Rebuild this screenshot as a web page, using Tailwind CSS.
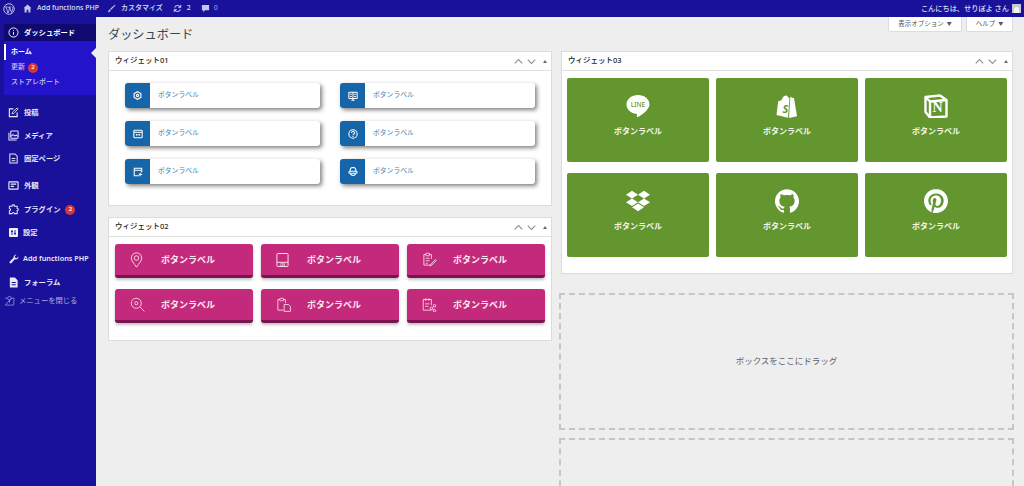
<!DOCTYPE html>
<html lang="ja">
<head>
  <meta charset="UTF-8" />
  <meta name="viewport" content="width=device-width, initial-scale=1.0"/>
  <title>ダッシュボード</title>
  <script src="https://cdn.jsdelivr.net/npm/@tailwindcss/browser@4"></script>
</head>
<body class="h-[486px] overflow-hidden bg-[#eeeeee] font-['Noto_Sans','Noto_Sans_CJK_JP',sans-serif] text-[#1d2327]">

  <!-- admin bar -->
  <header class="h-[17px] bg-[#1a119a] flex items-center justify-between pl-[3px] pr-[3px] text-[7px] font-medium text-[#dfe0f5]">
    <div class="flex items-center">
      <svg class="w-[12px] h-[12px] text-[#b9bbe6]" viewBox="0 0 24 24" fill="none" stroke="currentColor"><circle cx="12" cy="12" r="10.500" stroke-width="2"/><path d="M4.500 8h5M6 8l4 12 3-8-1.500-4M11 8h5M13 8l4 11 2.500-7c.7-2-.500-4-2-5" stroke-width="1.800"/></svg>
      <svg class="w-[9px] h-[9px] ml-[8px] text-[#c3c5ea]" viewBox="0 0 20 20" fill="currentColor"><path d="M10 1 1 9.500h2.500V19h4.500v-6h4v6h4.500V9.500H19z"/></svg>
      <span class="ml-[5px]">Add functions PHP</span>
      <svg class="w-[9px] h-[9px] ml-[8px] text-[#c3c5ea]" viewBox="0 0 20 20" fill="currentColor"><path d="M17.500 1.500 19 3 9.500 13 7 10.500zM6 11.500 8.500 14c-1 3-4 4.500-7.500 4 2-1 2.500-2 3-4 .3-1.300 1-2.200 2-2.500z"/></svg>
      <span class="ml-[5px]">カスタマイズ</span>
      <svg class="w-[9px] h-[9px] ml-[10px] text-[#c3c5ea]" viewBox="0 0 20 20" fill="none" stroke="currentColor" stroke-width="2.400"><path d="M3.500 8A7 7 0 0 1 16 6.500M16.500 12A7 7 0 0 1 4 13.500"/><path d="M17.500 2v6h-6M2.500 18v-6h6" stroke-width="1.500" fill="currentColor"/></svg>
      <span class="ml-[5px]">2</span>
      <svg class="w-[9px] h-[9px] ml-[10px] text-[#c3c5ea]" viewBox="0 0 20 20" fill="currentColor"><path d="M2 2h16v12H9l-4 4.500V14H2z"/></svg>
      <span class="ml-[4px] text-[#8f8fd8]">0</span>
    </div>
    <div class="flex items-center gap-[3px] text-[7.200px]">
      <span>こんにちは、せりぽよ さん</span>
      <span class="w-[9px] h-[9px] bg-[#c9c9d6] flex items-end justify-center"><span class="w-[5px] h-[6px] rounded-t-full bg-[#f2f2f2]"></span></span>
    </div>
  </header>

  <div class="flex h-[469px] overflow-hidden">
    <!-- sidebar -->
    <nav class="w-[96px] shrink-0 bg-[#1a119a] pt-[7px] text-[7.300px] font-semibold text-[#e8e8f6]">
      <div class="relative ml-[4px]">
        <div class="h-[17px] bg-[#100a70] flex items-center pl-[4px] gap-[5px] text-white">
          <svg class="w-[11px] h-[11px]" viewBox="0 0 24 24" fill="none" stroke="currentColor" stroke-width="2"><circle cx="12" cy="12" r="10"/><path d="M12 11v6M12 7v2"/></svg>
          <span>ダッシュボード</span>
        </div>
        <div class="relative h-[54px] bg-[#2313c9] pt-[3px] text-[7px] font-medium">
          <div class="h-[16px] border-l-2 border-white pl-[5px] flex items-center font-bold text-white">ホーム</div>
          <div class="h-[15px] pl-[7px] flex items-center gap-[3px] text-[#c8c8f2]">更新 <span class="w-[10px] h-[10px] rounded-full bg-[#d63638] text-white text-[6px] flex items-center justify-center">2</span></div>
          <div class="h-[15px] pl-[7px] flex items-center text-[#c8c8f2]">ストアレポート</div>
          <span class="absolute right-0 top-[7px] border-y-[5px] border-r-[5px] border-y-transparent border-r-[#eeeeee]"></span>
        </div>
      </div>

      <div class="mt-[8px] h-[19px] flex items-center pl-[8px] gap-[5px]">
        <svg class="w-[11px] h-[11px]" viewBox="0 0 24 24" fill="none" stroke="currentColor" stroke-width="2.500"><path d="M12 4H3v17h17v-9"/><path d="M9 15l1-4L20 2l2 2-9 10z" stroke-width="1.800"/></svg>
        <span>投稿</span>
      </div>
      <div class="mt-[4px] h-[19px] flex items-center pl-[8px] gap-[5px]">
        <svg class="w-[11px] h-[11px]" viewBox="0 0 24 24" fill="none" stroke="currentColor" stroke-width="2.200"><path d="M2 6v16h17"/><rect x="6" y="2" width="16" height="16" rx="1.500"/><path d="M6 14l5-4 4 3 3-2 4 3" /></svg>
        <span>メディア</span>
      </div>
      <div class="mt-[4px] h-[19px] flex items-center pl-[8px] gap-[5px]">
        <svg class="w-[11px] h-[11px]" viewBox="0 0 24 24" fill="none" stroke="currentColor" stroke-width="2.200"><path d="M4 2h11l5 5v15H4z"/><path d="M8 12h8M8 17h8"/></svg>
        <span>固定ページ</span>
      </div>
      <div class="mt-[8px] h-[19px] flex items-center pl-[8px] gap-[5px]">
        <svg class="w-[11px] h-[11px]" viewBox="0 0 24 24" fill="none" stroke="currentColor" stroke-width="2.500"><rect x="2" y="4" width="20" height="16" rx="1"/><path d="M6 9h12M6 14h7"/></svg>
        <span>外観</span>
      </div>
      <div class="mt-[5px] h-[19px] flex items-center pl-[8px] gap-[5px]">
        <svg class="w-[11px] h-[11px]" viewBox="0 0 24 24" fill="none" stroke="currentColor" stroke-width="2.200"><path d="M9 3c0-2 5-2 5 0 0 1-1 1.500 0 2h6v5c1 .8 2.500-.5 2.500 2s-1.500 2-2.500 2v7h-6c0-3-5-3-5 0H3v-6c2 0 2.500-1 2.500-2.500S4 10 3 10V5h6c.5-.5 0-1 0-2z"/></svg>
        <span>プラグイン</span>
        <span class="w-[10px] h-[10px] rounded-full bg-[#d63638] text-white text-[6px] flex items-center justify-center">2</span>
      </div>
      <div class="mt-[4px] h-[19px] flex items-center pl-[9px] gap-[5px]">
        <span class="w-[9px] h-[9px] bg-[#f0f0fa] rounded-[1px] flex items-center justify-center text-[#1a119a] text-[6px] leading-none">
          <svg class="w-[7px] h-[7px]" viewBox="0 0 14 14" fill="none" stroke="currentColor" stroke-width="1.800"><path d="M4 2v10M2 5h4M10 2v10M8 9h4"/></svg>
        </span>
        <span>設定</span>
      </div>
      <div class="mt-[7px] h-[19px] flex items-center pl-[9px] gap-[4px]">
        <svg class="w-[10px] h-[10px]" viewBox="0 0 20 20" fill="currentColor"><path d="M19 5.500c0 3-2.500 5.500-5.500 5.500-.7 0-1.300-.1-1.900-.3L5 18c-1 1-2.500 1-3.300 0s-1-2.300 0-3.200l7.400-7.300A5.500 5.500 0 0 1 15 1l-3.500 3.500 1 3 3 1L19 5z"/></svg>
        <span>Add functions PHP</span>
      </div>
      <div class="mt-[5px] h-[19px] flex items-center pl-[8px] gap-[5px]">
        <svg class="w-[11px] h-[11px]" viewBox="0 0 24 24" fill="currentColor"><path d="M4 1h11l6 6v16H4zM8 11v2h9v-2zm0 5v2h9v-2z" fill-rule="evenodd"/></svg>
        <span>フォーラム</span>
      </div>
      <div class="h-[17px] flex items-center pl-[4px] gap-[4px] font-normal text-[#a8a8e0]">
        <svg class="w-[11px] h-[11px]" viewBox="0 0 24 24" fill="none" stroke="currentColor" stroke-width="1.500"><path d="M2 7h6M16 7h6l-1 15H3z"/><circle cx="12" cy="7" r="4"/><path d="M12 11v6"/></svg>
        <span>メニューを閉じる</span>
      </div>
    </nav>

    <!-- main -->
    <main class="flex-1 min-w-0 pl-[12px] pr-[11px] overflow-hidden">
      <div class="flex justify-between items-start h-[34px]">
        <h1 class="pt-[9px] text-[12.200px] leading-[18px] text-[#3c434a]">ダッシュボード</h1>
        <div class="flex gap-[4px] text-[6.500px] text-[#50575e]">
          <div class="w-[74px] h-[15px] bg-white border-x border-b border-[#dcdcde] flex items-center justify-center gap-[3px] rounded-b-[2px]">表示オプション <span class="text-[5px]">▼</span></div>
          <div class="w-[47px] h-[15px] bg-white border-x border-b border-[#dcdcde] flex items-center justify-center gap-[3px] rounded-b-[2px]">ヘルプ <span class="text-[5px]">▼</span></div>
        </div>
      </div>

      <div class="flex gap-[8px]">
        <!-- left column -->
        <div class="w-[444px] shrink-0 flex flex-col gap-[11px]">
          <section class="h-[155px] bg-white border border-[#dcdcde]">
            <div class="h-[19px] border-b border-[#e0e0e0] flex items-center justify-between pl-[6px] pr-[4px]">
              <h2 class="text-[7.500px] font-medium text-[#1d2327]">ウィジェット01</h2>
              <div class="flex items-center gap-[4px] text-[#8c8f94]">
                <svg class="w-[9px] h-[9px]" viewBox="0 0 12 12" fill="none" stroke="currentColor" stroke-width="1.500"><path d="M1 8.500 6 3.500l5 5"/></svg>
                <svg class="w-[9px] h-[9px]" viewBox="0 0 12 12" fill="none" stroke="currentColor" stroke-width="1.500"><path d="M1 3.500 6 8.500l5-5"/></svg>
                <span class="ml-[3px] border-x-[2.500px] border-b-[3px] border-x-transparent border-b-[#646970]"></span>
              </div>
            </div>
            <div class="grid grid-cols-[195px_195px] gap-x-[20px] gap-y-[13px] pl-[16px] pt-[12px]">
              <a class="h-[25px] flex items-stretch bg-white rounded-[3px] shadow-[2px_2px_4px_rgba(0,0,0,0.5)] text-[6.800px] text-[#3f7fb2]">
                <span class="w-[25px] bg-[#1565a8] rounded-l-[3px] flex items-center justify-center text-white"><svg class="w-[9px] h-[9px]" viewBox="0 0 24 24" fill="none" stroke="currentColor" stroke-width="3"><path d="M12 2 21 7v10l-9 5-9-5V7z"/><circle cx="12" cy="12" r="3"/></svg></span>
                <span class="pl-[8px] self-center">ボタンラベル</span>
              </a>
              <a class="h-[25px] flex items-stretch bg-white rounded-[3px] shadow-[2px_2px_4px_rgba(0,0,0,0.5)] text-[6.800px] text-[#3f7fb2]">
                <span class="w-[25px] bg-[#1565a8] rounded-l-[3px] flex items-center justify-center text-white"><svg class="w-[10px] h-[10px]" viewBox="0 0 24 24" fill="none" stroke="currentColor" stroke-width="2.500"><rect x="2" y="3" width="20" height="15" rx="1"/><path d="M8 22h8M12 18v4M12 3v15M5 8h4M15 8h4M5 13h4M15 13h4"/></svg></span>
                <span class="pl-[8px] self-center">ボタンラベル</span>
              </a>
              <a class="h-[25px] flex items-stretch bg-white rounded-[3px] shadow-[2px_2px_4px_rgba(0,0,0,0.5)] text-[6.800px] text-[#3f7fb2]">
                <span class="w-[25px] bg-[#1565a8] rounded-l-[3px] flex items-center justify-center text-white"><svg class="w-[10px] h-[10px]" viewBox="0 0 24 24" fill="none" stroke="currentColor" stroke-width="2.500"><rect x="2" y="3" width="20" height="18" rx="2"/><path d="M2 8h20"/><path d="M7 14h4M13 14h4" stroke-width="3.500"/></svg></span>
                <span class="pl-[8px] self-center">ボタンラベル</span>
              </a>
              <a class="h-[25px] flex items-stretch bg-white rounded-[3px] shadow-[2px_2px_4px_rgba(0,0,0,0.5)] text-[6.800px] text-[#3f7fb2]">
                <span class="w-[25px] bg-[#1565a8] rounded-l-[3px] flex items-center justify-center text-white"><svg class="w-[10px] h-[10px]" viewBox="0 0 24 24" fill="none" stroke="currentColor" stroke-width="2.500"><circle cx="12" cy="12" r="10"/><path d="M8.500 9.500a3.500 3.500 0 1 1 5 3c-1 .6-1.500 1-1.500 2.500M12 17v2"/></svg></span>
                <span class="pl-[8px] self-center">ボタンラベル</span>
              </a>
              <a class="h-[25px] flex items-stretch bg-white rounded-[3px] shadow-[2px_2px_4px_rgba(0,0,0,0.5)] text-[6.800px] text-[#3f7fb2]">
                <span class="w-[25px] bg-[#1565a8] rounded-l-[3px] flex items-center justify-center text-white"><svg class="w-[10px] h-[10px]" viewBox="0 0 24 24" fill="none" stroke="currentColor" stroke-width="2.500"><path d="M21 13V3H3v18h11M3 8h18"/><path d="M17 14v8M14 18h8"/></svg></span>
                <span class="pl-[8px] self-center">ボタンラベル</span>
              </a>
              <a class="h-[25px] flex items-stretch bg-white rounded-[3px] shadow-[2px_2px_4px_rgba(0,0,0,0.5)] text-[6.800px] text-[#3f7fb2]">
                <span class="w-[25px] bg-[#1565a8] rounded-l-[3px] flex items-center justify-center text-white"><svg class="w-[10px] h-[10px]" viewBox="0 0 24 24" fill="none" stroke="currentColor" stroke-width="2.500"><path d="M5 12V8a7 7 0 0 1 14 0v4"/><rect x="2" y="10" width="20" height="5" rx="2.500"/><path d="M6 15c0 7 12 7 12 0"/></svg></span>
                <span class="pl-[8px] self-center">ボタンラベル</span>
              </a>
            </div>
          </section>

          <section class="h-[124px] bg-white border border-[#dcdcde]">
            <div class="h-[19px] border-b border-[#e0e0e0] flex items-center justify-between pl-[6px] pr-[4px]">
              <h2 class="text-[7.500px] font-medium text-[#1d2327]">ウィジェット02</h2>
              <div class="flex items-center gap-[4px] text-[#8c8f94]">
                <svg class="w-[9px] h-[9px]" viewBox="0 0 12 12" fill="none" stroke="currentColor" stroke-width="1.500"><path d="M1 8.500 6 3.500l5 5"/></svg>
                <svg class="w-[9px] h-[9px]" viewBox="0 0 12 12" fill="none" stroke="currentColor" stroke-width="1.500"><path d="M1 3.500 6 8.500l5-5"/></svg>
                <span class="ml-[3px] border-x-[2.500px] border-b-[3px] border-x-transparent border-b-[#646970]"></span>
              </div>
            </div>
            <div class="grid grid-cols-[138px_138px_138px] gap-x-[8px] gap-y-[11px] pl-[6px] pt-[7px]">
              <a class="h-[34px] flex items-center bg-[#c42a7b] border-b-[3px] border-[#7a1450] rounded-[3px] shadow-[0_2px_3px_rgba(0,0,0,0.25)] text-[9px] font-semibold text-[#fbe9f2]">
                <span class="w-[46px] pl-[15px]"><svg class="w-[13px] h-[16px]" viewBox="0 0 20 24" fill="none" stroke="currentColor" stroke-width="1.300"><path d="M10 23C6 17 2 13 2 9a8 8 0 0 1 16 0c0 4-4 8-8 14z"/><circle cx="10" cy="9" r="3.500"/></svg></span>
                <span>ボタンラベル</span>
              </a>
              <a class="h-[34px] flex items-center bg-[#c42a7b] border-b-[3px] border-[#7a1450] rounded-[3px] shadow-[0_2px_3px_rgba(0,0,0,0.25)] text-[9px] font-semibold text-[#fbe9f2]">
                <span class="w-[46px] pl-[15px]"><svg class="w-[13px] h-[16px]" viewBox="0 0 14 16" fill="none" stroke="currentColor" stroke-width="1"><rect x="1" y="1" width="12" height="14" rx="1"/><path d="M1 10.500h12"/><text x="7" y="14" text-anchor="middle" font-size="3.200" fill="currentColor" stroke="none">CSS</text></svg></span>
                <span>ボタンラベル</span>
              </a>
              <a class="h-[34px] flex items-center bg-[#c42a7b] border-b-[3px] border-[#7a1450] rounded-[3px] shadow-[0_2px_3px_rgba(0,0,0,0.25)] text-[9px] font-semibold text-[#fbe9f2]">
                <span class="w-[46px] pl-[15px]"><svg class="w-[15px] h-[15px]" viewBox="0 0 24 24" fill="none" stroke="currentColor" stroke-width="1.300"><path d="M15 21H3V4h3M12 4h3v7"/><rect x="6" y="2" width="6" height="4" rx="1"/><path d="M6 10h6M6 14h6M6 18h3M14 20l-1 2 2-.5 8-8-1.500-1.500z"/></svg></span>
                <span>ボタンラベル</span>
              </a>
              <a class="h-[34px] flex items-center bg-[#c42a7b] border-b-[3px] border-[#7a1450] rounded-[3px] shadow-[0_2px_3px_rgba(0,0,0,0.25)] text-[9px] font-semibold text-[#fbe9f2]">
                <span class="w-[46px] pl-[15px]"><svg class="w-[15px] h-[15px]" viewBox="0 0 24 24" fill="none" stroke="currentColor" stroke-width="1.300"><circle cx="10" cy="10" r="8"/><circle cx="10" cy="10" r="2.500"/><path d="M16 16l7 7"/></svg></span>
                <span>ボタンラベル</span>
              </a>
              <a class="h-[34px] flex items-center bg-[#c42a7b] border-b-[3px] border-[#7a1450] rounded-[3px] shadow-[0_2px_3px_rgba(0,0,0,0.25)] text-[9px] font-semibold text-[#fbe9f2]">
                <span class="w-[46px] pl-[15px]"><svg class="w-[15px] h-[15px]" viewBox="0 0 24 24" fill="none" stroke="currentColor" stroke-width="1.300"><path d="M12 21H3V4h3M12 4h3v6"/><rect x="6" y="2" width="6" height="4" rx="1"/><path d="M13 12h7l3 3v8H13z"/></svg></span>
                <span>ボタンラベル</span>
              </a>
              <a class="h-[34px] flex items-center bg-[#c42a7b] border-b-[3px] border-[#7a1450] rounded-[3px] shadow-[0_2px_3px_rgba(0,0,0,0.25)] text-[9px] font-semibold text-[#fbe9f2]">
                <span class="w-[46px] pl-[15px]"><svg class="w-[15px] h-[15px]" viewBox="0 0 24 24" fill="none" stroke="currentColor" stroke-width="1.300"><path d="M15 21H2V4h13v9M6 2v4M11 2v4M5 11h7M5 15h5"/><circle cx="20" cy="14" r="2"/><circle cx="20" cy="22" r="2"/><circle cx="15" cy="18" r="2"/><path d="M17 17l2-2M17 19l2 2"/></svg></span>
                <span>ボタンラベル</span>
              </a>
            </div>
          </section>
        </div>

        <!-- right column -->
        <div class="w-[453px] shrink-0 flex flex-col">
          <section class="ml-[1px] w-[452px] h-[223px] bg-white border border-[#dcdcde]">
            <div class="h-[19px] border-b border-[#e0e0e0] flex items-center justify-between pl-[6px] pr-[4px]">
              <h2 class="text-[7.500px] font-medium text-[#1d2327]">ウィジェット03</h2>
              <div class="flex items-center gap-[4px] text-[#8c8f94]">
                <svg class="w-[9px] h-[9px]" viewBox="0 0 12 12" fill="none" stroke="currentColor" stroke-width="1.500"><path d="M1 8.500 6 3.500l5 5"/></svg>
                <svg class="w-[9px] h-[9px]" viewBox="0 0 12 12" fill="none" stroke="currentColor" stroke-width="1.500"><path d="M1 3.500 6 8.500l5-5"/></svg>
                <span class="ml-[3px] border-x-[2.500px] border-b-[3px] border-x-transparent border-b-[#646970]"></span>
              </div>
            </div>
            <div class="grid grid-cols-[142px_142px_142px] gap-x-[7px] gap-y-[11px] pl-[5px] pt-[7px]">
              <a class="h-[84px] bg-[#63962f] rounded-[2px] flex flex-col items-center pt-[16px] text-[8px] font-semibold text-[#f3f7ec]">
                <span class="relative h-[24px] w-[24px] flex items-center justify-center">
                  <svg class="absolute inset-0" viewBox="0 0 24 24" fill="white"><path d="M12 1C5.500 1 .500 5.200.500 10.500c0 4.700 4 8.600 9.500 9.300.4.100.9.300 1 .6.100.3.100.7 0 1l-.2 1c0 .3-.2 1.100 1 .6s6.300-3.700 8.500-6.300c1.600-1.700 3.200-3.800 3.200-6.200C23.500 5.200 18.500 1 12 1z"/></svg>
                  <span class="relative -mt-[3px] text-[6.500px] font-medium text-[#63962f]">LINE</span>
                </span>
                <span class="mt-[7px]">ボタンラベル</span>
              </a>
              <a class="h-[84px] bg-[#63962f] rounded-[2px] flex flex-col items-center pt-[16px] text-[8px] font-semibold text-[#f3f7ec]">
                <span class="relative h-[24px] w-[24px] flex items-center justify-center">
                  <svg class="absolute inset-0" viewBox="0 0 24 24" fill="white"><path d="M15.300 3.500 14 24l8-1.700L19 3.900l-2-.2-1.300-1.300zM14.500 3.700l-1 .3C13 2.500 12.200 1.500 11 1.500 8.500 1.500 7 4.500 6.500 6.300L4 7c-.7.200-.8.300-.9 1L1.500 21 13 23.800z"/></svg>
                  <span class="relative mt-[5px] -ml-[3px] text-[11px] font-bold italic leading-none text-[#63962f]">S</span>
                </span>
                <span class="mt-[7px]">ボタンラベル</span>
              </a>
              <a class="h-[84px] bg-[#63962f] rounded-[2px] flex flex-col items-center pt-[16px] text-[8px] font-semibold text-[#f3f7ec]">
                <span class="relative h-[24px] w-[24px] flex items-center justify-center">
                  <svg class="absolute inset-0" viewBox="0 0 24 24" fill="none" stroke="white" stroke-width="2.400" stroke-linejoin="round"><path d="M1.500 3 16 1.500 22.500 6v16.500L6 23.500 1.500 18z"/><path d="M1.500 3 6 7.500l16.500-1.500M6 7.500v16"/></svg>
                  <span class="relative mt-[3px] ml-[3px] font-['Liberation_Serif',serif] text-[14px] font-bold leading-none text-white">N</span>
                </span>
                <span class="mt-[7px]">ボタンラベル</span>
              </a>
              <a class="h-[84px] bg-[#63962f] rounded-[2px] flex flex-col items-center pt-[16px] text-[8px] font-semibold text-[#f3f7ec]">
                <span class="h-[24px] w-[24px]"><svg viewBox="0 0 24 24" fill="white"><path d="M6 1.807L0 5.629l6 3.822 6.001-3.822L6 1.807zM18 1.807l-6 3.822 6 3.822 6-3.822-6-3.822zM0 13.274l6 3.822 6.001-3.822L6 9.452l-6 3.822zM18 9.452l-6 3.822 6 3.822 6-3.822-6-3.822zM6 18.371l6.001 3.822 6-3.822-6-3.822L6 18.371z"/></svg></span>
                <span class="mt-[7px]">ボタンラベル</span>
              </a>
              <a class="h-[84px] bg-[#63962f] rounded-[2px] flex flex-col items-center pt-[16px] text-[8px] font-semibold text-[#f3f7ec]">
                <span class="h-[24px] w-[24px]"><svg viewBox="0 0 24 24" fill="white"><path d="M12 .297c-6.630 0-12 5.373-12 12 0 5.303 3.438 9.800 8.205 11.385.6.113.82-.258.82-.577 0-.285-.01-1.040-.015-2.040-3.338.724-4.042-1.610-4.042-1.610C4.422 18.070 3.633 17.700 3.633 17.700c-1.087-.744.084-.729.084-.729 1.205.084 1.838 1.236 1.838 1.236 1.070 1.835 2.809 1.305 3.495.998.108-.776.417-1.305.76-1.605-2.665-.3-5.466-1.332-5.466-5.930 0-1.310.465-2.380 1.235-3.220-.135-.303-.54-1.523.105-3.176 0 0 1.005-.322 3.300 1.230.96-.267 1.980-.399 3-.405 1.020.006 2.040.138 3 .405 2.280-1.552 3.285-1.230 3.285-1.230.645 1.653.24 2.873.12 3.176.765.84 1.230 1.910 1.230 3.220 0 4.610-2.805 5.625-5.475 5.920.42.36.81 1.096.81 2.220 0 1.606-.015 2.896-.015 3.286 0 .315.21.69.825.57C20.565 22.092 24 17.592 24 12.297c0-6.627-5.373-12-12-12"/></svg></span>
                <span class="mt-[7px]">ボタンラベル</span>
              </a>
              <a class="h-[84px] bg-[#63962f] rounded-[2px] flex flex-col items-center pt-[16px] text-[8px] font-semibold text-[#f3f7ec]">
                <span class="h-[24px] w-[24px]"><svg viewBox="0 0 24 24" fill="white"><path d="M12.017 0C5.396 0 .029 5.367.029 11.987c0 5.079 3.158 9.417 7.618 11.162-.105-.949-.199-2.403.041-3.439.219-.937 1.406-5.957 1.406-5.957s-.359-.72-.359-1.781c0-1.663.967-2.911 2.168-2.911 1.024 0 1.518.769 1.518 1.688 0 1.029-.653 2.567-.992 3.992-.285 1.193.6 2.165 1.775 2.165 2.128 0 3.768-2.245 3.768-5.487 0-2.861-2.063-4.869-5.008-4.869-3.410 0-5.409 2.562-5.409 5.199 0 1.033.394 2.143.889 2.741.099.12.112.225.085.345-.09.375-.293 1.199-.334 1.363-.053.225-.172.271-.401.165-1.495-.69-2.433-2.878-2.433-4.646 0-3.776 2.748-7.252 7.920-7.252 4.158 0 7.392 2.967 7.392 6.923 0 4.135-2.607 7.462-6.233 7.462-1.214 0-2.354-.629-2.758-1.379l-.749 2.848c-.269 1.045-1.004 2.352-1.498 3.146 1.123.345 2.306.535 3.550.535 6.607 0 11.985-5.365 11.985-11.987C23.970 5.390 18.592.026 11.985.026L12.017 0z"/></svg></span>
                <span class="mt-[7px]">ボタンラベル</span>
              </a>
            </div>
          </section>

          <div class="-ml-[1px] mt-[19px] w-[455px] h-[137px] border-2 border-dashed border-[#c6c6c6] flex items-center justify-center text-[8.500px] text-[#5f6368]">ボックスをここにドラッグ</div>
          <div class="-ml-[1px] mt-[8px] w-[455px] h-[80px] border-2 border-dashed border-[#c6c6c6]"></div>
        </div>
      </div>
    </main>
  </div>
</body>
</html>
